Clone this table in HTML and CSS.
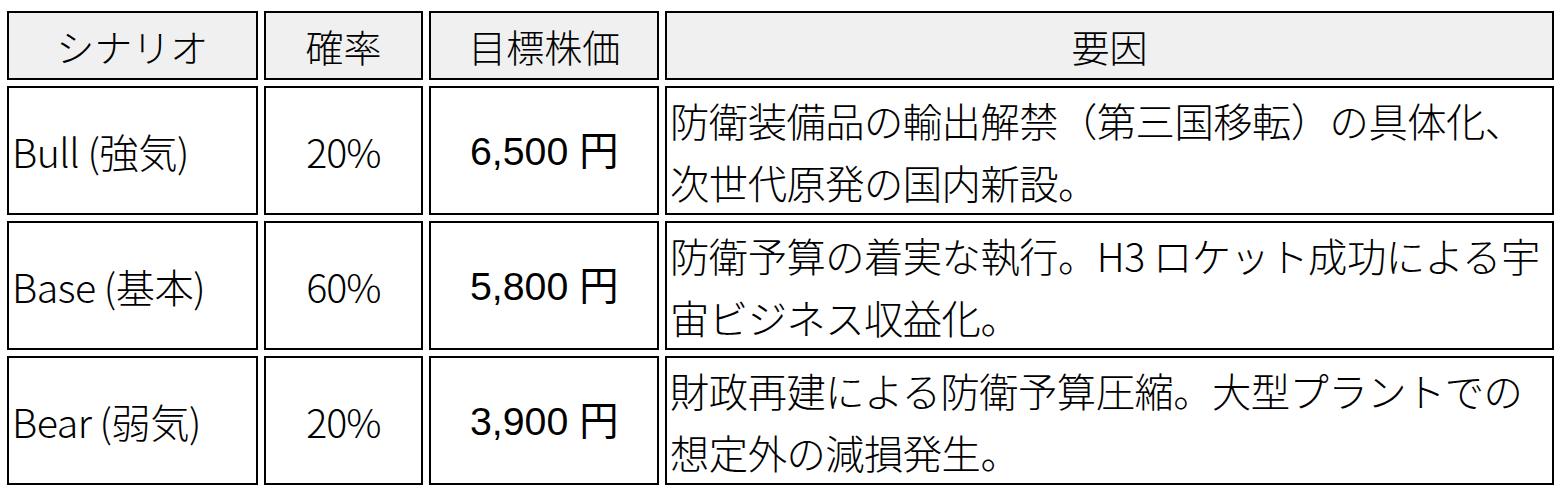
FILE: index.html
```html
<!DOCTYPE html>
<html lang="ja">
<head>
<meta charset="utf-8">
<title>シナリオ分析</title>
<link rel="stylesheet" href="styles.css">
</head>
<body>
<table class="scenarios">
  <thead>
    <tr>
      <th class="c-name">シナリオ</th>
      <th class="c-prob">確率</th>
      <th class="c-price">目標株価</th>
      <th class="c-factor">要因</th>
    </tr>
  </thead>
  <tbody>
    <tr>
      <td class="name">Bull (強気)</td>
      <td class="prob">20%</td>
      <td class="price">6,500 円</td>
      <td class="factor">防衛装備品の輸出解禁（第三国移転）の具体化、次世代原発の国内新設。</td>
    </tr>
    <tr>
      <td class="name">Base (基本)</td>
      <td class="prob">60%</td>
      <td class="price">5,800 円</td>
      <td class="factor">防衛予算の着実な執行。H3 ロケット成功による宇宙ビジネス収益化。</td>
    </tr>
    <tr>
      <td class="name">Bear (弱気)</td>
      <td class="prob">20%</td>
      <td class="price">3,900 円</td>
      <td class="factor">財政再建による防衛予算圧縮。大型プラントでの想定外の減損発生。</td>
    </tr>
  </tbody>
</table>
</body>
</html>
```

FILE: styles.css
```css
html {
  overflow: hidden;
  background: #ffffff;
}

body {
  margin: 0;
  padding: 5px 0 0 1px;
  font-family: "Noto Sans CJK JP", sans-serif;
  font-weight: 300;
  font-size: 39.3px;
  color: #000000;
}

.scenarios {
  border-collapse: separate;
  border-spacing: 6px;
  table-layout: fixed;
}

.scenarios th,
.scenarios td {
  box-sizing: border-box;
  border: 2px solid #000000;
  padding: 1px 3px 0;
  line-height: 62px;
  vertical-align: middle;
}

.scenarios th {
  height: 69px;
  padding: 0;
  line-height: 65px;
  background: #f0f0f0;
  font-weight: 300;
  font-size: 38px;
  text-align: center;
}

.c-name { width: 251px; }
.c-prob { width: 160px; }
.c-price { width: 230px; }
.c-factor { width: 891px; }

.scenarios td {
  height: 129px;
}

.name {
  text-align: left;
  letter-spacing: -0.5px;
}

.prob {
  text-align: center;
  letter-spacing: -1px;
}

.price {
  text-align: center;
  font-family: "Liberation Sans", "Noto Sans CJK JP", sans-serif;
  font-weight: 400;
}

.factor {
  text-align: left;
  letter-spacing: -0.5px;
}
```
